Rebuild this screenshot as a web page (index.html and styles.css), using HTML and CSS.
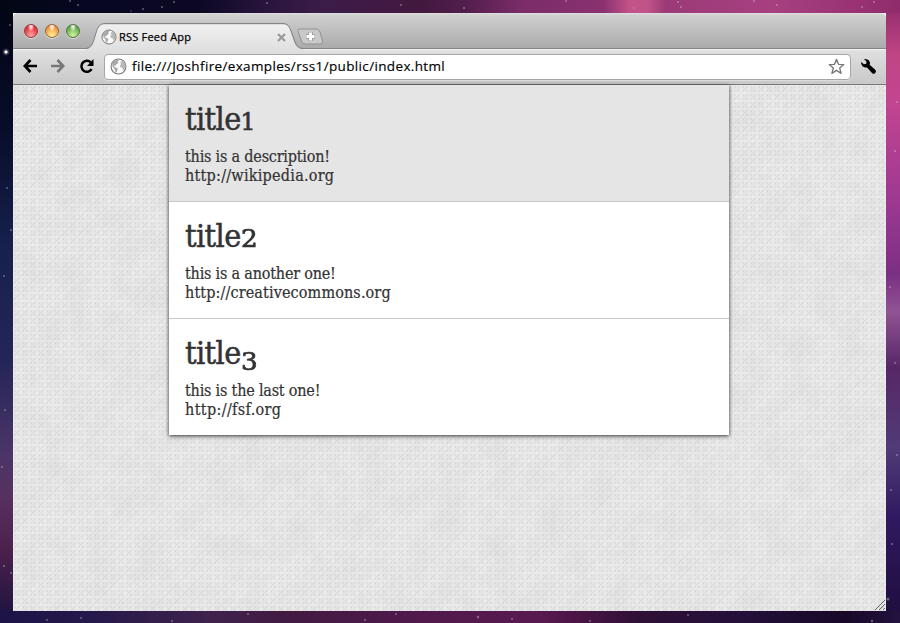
FILE: index.html
```html
<!DOCTYPE html>
<html lang="en">
<head>
<meta charset="utf-8">
<title>RSS Feed App</title>
<link rel="stylesheet" href="styles.css">
</head>
<body>
<svg class="stars" width="900" height="623" fill="#ddd">
  <defs>
    <symbol id="globe" viewBox="0 0 16 16">
      <circle cx="8" cy="8" r="7" fill="#fbfbfb" stroke="#777" stroke-width="1"/>
      <path d="M2 5 4.2 2.3 7.6 1.6 8.5 2.7 7.1 3.6 7.9 4.800 5.800 6.200 5.200 7.500 3.800 7.100 4.100 8.600 6 9 7.500 10.300 6.700 11.800 6.200 14.200 4.700 12.500 4.300 10.300 2.400 8.300Z" fill="#aaa"/>
      <path d="M10.200 3.200 12.200 3.100 14 5.300 14.600 8.200 13.400 11.200 12.100 11.700 11.800 9.500 9.800 8.800 9.300 7 10.700 5.600 9.700 4.800Z" fill="#b8b8b8"/>
    </symbol>
  </defs>
  <g opacity=".4">
    <circle cx="70" cy="1" r="1"/><circle cx="78" cy="5" r="1"/><circle cx="131" cy="11" r=".8"/><circle cx="143" cy="9" r="1"/><circle cx="162" cy="7" r="1"/><circle cx="174" cy="2" r="1"/><circle cx="267" cy="3" r="1"/><circle cx="401" cy="5" r="1"/><circle cx="464" cy="8" r="1"/><circle cx="566" cy="1" r="1"/><circle cx="634" cy="8" r=".8"/><circle cx="678" cy="2" r="1"/><circle cx="681" cy="7" r="1"/><circle cx="754" cy="1" r="1"/><circle cx="777" cy="5" r="1"/><circle cx="862" cy="7" r="1"/><circle cx="874" cy="2" r="1"/>
    <circle cx="10" cy="25" r="1"/><circle cx="7" cy="188" r="1"/><circle cx="11" cy="230" r="1"/><circle cx="4" cy="276" r="1"/><circle cx="5" cy="410" r="1"/><circle cx="2" cy="467" r="1"/><circle cx="4" cy="566" r="1"/><circle cx="11" cy="573" r="1"/>
    <circle cx="897" cy="102" r="1"/><circle cx="895" cy="151" r="1"/><circle cx="890" cy="287" r="1"/><circle cx="895" cy="363" r="1"/><circle cx="897" cy="455" r="1"/><circle cx="891" cy="490" r="1"/><circle cx="892" cy="544" r="1"/><circle cx="888" cy="599" r="1.500"/>
    <circle cx="47" cy="620" r="1"/><circle cx="81" cy="618" r="1"/><circle cx="172" cy="621" r="1"/><circle cx="248" cy="614" r="1"/><circle cx="365" cy="620" r="1"/><circle cx="396" cy="614" r="1"/><circle cx="478" cy="617" r="1.200"/><circle cx="512" cy="619" r="1"/><circle cx="590" cy="621" r="1"/><circle cx="688" cy="615" r="1"/><circle cx="872" cy="621" r="1.200"/>
  </g>
</svg>
<main class="window">
  <header class="tabs">
    <div class="lights"><i class="light red"></i><i class="light amber"></i><i class="light green"></i></div>
    <div class="tab">
      <svg class="tab-shape" width="218" height="28" viewBox="0 0 218 28">
        <defs><linearGradient id="tg" x2="0" y2="1"><stop stop-color="#f0f0f0"/><stop offset="1" stop-color="#dfdfdf"/></linearGradient></defs>
        <path d="M0 26C7 25 7 20 10 11C12 4 14 1.500 19 1.500H197C203 1.500 203 5 206 13C209 22 210 25.500 218 26V28H0Z" fill="url(#tg)"/>
        <path d="M0 25.500C7 24 7 19 10 10C12 3 14 .5 19 .5H197C203 .5 204 5 207 13C210 22 211 25.500 218 25.500" fill="none" stroke="#858585"/>
      </svg>
      <svg class="favicon" width="16" height="16"><use href="#globe"/></svg>
      <span class="tab-title">RSS Feed App</span>
      <svg class="close" width="9" height="9" viewBox="0 0 9 9"><path d="M1 1 8 8M8 1 1 8" stroke="#999" stroke-width="2.200"/></svg>
    </div>
    <svg class="newtab" width="27" height="17" viewBox="0 0 27 17">
      <path d="M2 1H19Q22 1 23 4L25.500 13Q26 16 23 16H8Q5.500 16 4.500 13L1 3Q.5 1 2 1Z" fill="#c9c9c9" stroke="#929292"/>
      <path d="M13.500 4V13M9 8.500H18" stroke="#999" stroke-width="4.500"/>
      <path d="M13.500 4.500V12.500M9.500 8.500H17.500" stroke="#fff" stroke-width="3"/>
    </svg>
  </header>
  <nav class="toolbar">
    <svg class="back" width="15" height="14" viewBox="0 0 15 14"><path d="M7.500 1 1.800 7 7.500 13M2 7H14" fill="none" stroke="#000" stroke-width="2.700"/></svg>
    <svg class="forward" width="15" height="14" viewBox="0 0 15 14"><path d="M7.500 1 13.200 7 7.500 13M1 7H13" fill="none" stroke="#777" stroke-width="2.700"/></svg>
    <svg class="reload" width="16" height="15" viewBox="0 0 16 15"><path d="M11.800 3.300A5.500 5.500 0 1 0 12.600 10.200" fill="none" stroke="#000" stroke-width="2.500"/><path d="M14.500 0V7H8Z"/></svg>
    <div class="address">
      <svg width="17" height="17"><use href="#globe"/></svg>
      <span class="url">file:///Joshfire/examples/rss1/public/index.html</span>
      <svg class="star" width="17" height="17" viewBox="0 0 17 17"><path d="M8.500 1.300 10.500 6.300 15.800 6.600 11.700 10 13.100 15.400 8.500 12.400 3.900 15.400 5.300 10 1.200 6.600 6.500 6.300Z" fill="#fff" stroke="#777" stroke-width="1.300" stroke-linejoin="round"/></svg>
    </div>
    <svg class="wrench" width="17" height="17" viewBox="0 0 17 17"><path d="M4 1Q7 .5 9 2.500Q10.500 4.500 9.600 6.700L15.500 12Q16.700 14 15 15.300Q13.500 16.500 12 14.900L7 9.400Q4.500 10 2.500 8.200Q.8 6.500 1.100 4.100L4 6.300 6.300 5.800 6.500 3.600Z"/></svg>
  </nav>
  <section class="page">
    <svg class="linen" width="873" height="526">
      <filter id="blotch" x="0" y="0" width="100%" height="100%"><feTurbulence type="fractalNoise" baseFrequency=".04" numOctaves="5" seed="4"/><feColorMatrix values="0 0 0 0 .5  0 0 0 0 .5  0 0 0 0 .5  .3 0 0 0 -.11"/></filter>
      <rect width="873" height="526" filter="url(#blotch)"/>
    </svg>
    <ul class="feed">
      <li class="item selected"><h2>title<span class="numeral">1</span></h2><p class="d1">this is a description!</p><p class="u1">http://wikipedia.org</p></li>
      <li class="item"><h2>title<span class="numeral wide">2</span></h2><p class="d2">this is a another one!</p><p class="u2">http://creativecommons.org</p></li>
      <li class="item"><h2>title<span class="numeral wide low">3</span></h2><p class="d3">this is the last one!</p><p class="u3">http://fsf.org</p></li>
    </ul>
    <svg class="grip" width="12" height="12" viewBox="0 0 12 12"><path d="M1 11 11 1M5 11 11 5M9 11 11 9" stroke="#666"/></svg>
  </section>
</main>
</body>
</html>
```
FILE: styles.css
```css
* { box-sizing: border-box; }
body {
  margin: 0; width: 900px; height: 623px; overflow: hidden; padding: 13px 14px 12px 13px;
  background:
    radial-gradient(circle at 6px 52px, #fff 0 1px, #aaa6 2px, transparent 4px) no-repeat,
    linear-gradient(90deg, #020714, #070722 10%, #0c0824 22%, #2a153e 30%, #3c1c49 36%, #43183f 47%, #531f4d 52%, #7b2c69 58%, #8a3170 67%, #c25389 70%, #c05388 72%, #9b3a77 74%, #a84080 86%, #902b6c) 0 0 / 900px 13px no-repeat,
    linear-gradient(90deg, #1d1347, #25184a 10%, #3f224d 23%, #421a42 32%, #51194c 47%, #591950 60%, #2f0f35 71%, #24103a 82%, #180827 94%, #21123f) 0 611px / 900px 12px no-repeat,
    linear-gradient(#030514, #080c28 20%, #17214d 40%, #252557 58%, #4b3568 73%, #57305f 80%, #4d214c 88%, #1a123f) 0 0 / 13px 623px no-repeat,
    linear-gradient(#8c2a68, #c04585 9%, #c34590 16%, #9e3992 32%, #7b2f83 44%, #905394 50%, #572765 59%, #503b78 72%, #2f1a61 83%, #1d0d3b) 886px 0 / 14px 623px no-repeat;
}
.stars { position: absolute; top: 0; left: 0; }
svg { display: block; flex: none; }
h2, p, ul { margin: 0; padding: 0; }
.window { position: relative; height: 598px; border-radius: 5px 5px 0 0; overflow: hidden; font-family: "Open Sans", "Noto Sans", sans-serif; color: #000; }
.tabs { height: 36px; display: flex; align-items: flex-start; background: linear-gradient(#e0e0e0 0, #d0d0d0 2px, #acacac 34px, #aaa 35px, #858585 35px); }
.lights { display: flex; gap: 7px; padding: 11px 0 0 11px; width: 73px; }
.light { width: 14px; height: 14px; border-radius: 50%; border: 1px solid; box-shadow: 0 1px 0 #ddd; flex: none; }
.red { border-color: #963b40; background: radial-gradient(ellipse at 50% 8%, #fffc 0 12%, transparent 38%), radial-gradient(circle at 50% 85%, #ffaaa5, #ed424a 55%, #b91f2b); }
.amber { border-color: #9c6537; background: radial-gradient(ellipse at 50% 8%, #fffc 0 12%, transparent 38%), radial-gradient(circle at 50% 85%, #fff29b, #f5a94b 55%, #c86526); }
.green { border-color: #4e7940; background: radial-gradient(ellipse at 50% 8%, #fffc 0 12%, transparent 38%), radial-gradient(circle at 50% 85%, #d3f5a0, #79b959 55%, #438139); }
.tab { display: grid; grid-template-columns: 15px 19px 155px 29px; width: 218px; height: 26px; margin-top: 10px; align-items: center; }
.tab-shape { grid-area: 1 / 1 / 2 / 5; align-self: start; }
.favicon { grid-area: 1 / 2; }
.tab-title { grid-area: 1 / 3; font-size: 11px; line-height: 16px; letter-spacing: .2px; margin-left: -1px; -webkit-text-stroke: .25px #000; }
.close { grid-area: 1 / 4; margin-left: 2px; }
.newtab { margin: 15px 0 0 -7px; }
.toolbar { height: 36px; display: flex; align-items: center; background: linear-gradient(#f4f4f4, #dfdfdf 2px, #c9c9c9 34px, #ccc 35px, #777 35px); padding: 0 8px 2px 10px; }
.forward { margin-left: 12px; }
.reload { margin-left: 14px; }
.address { display: flex; align-items: center; width: 747px; height: 26px; margin-left: 9px; border: 1px solid #a5a5a5; border-radius: 4px; background: #fff; padding: 0 5px; box-shadow: 0 1px #ddd; position: relative; top: .5px; }
.url { font-size: 13.5px; line-height: 18px; margin: -1px 0 0 5px; letter-spacing: .35px; white-space: nowrap; -webkit-text-stroke: .15px #000; }
.star { margin-left: auto; }
.wrench { margin-left: 9px; }
.page {
  height: 526px; position: relative; padding: 0 157px 0 156px;
  background:
    repeating-linear-gradient(135deg, #7777770c 0 1px, transparent 1px 4px),
    radial-gradient(circle at 2px 2px, #77777718 0 1px, transparent 1.500px) 0 0 / 4px 4px,
    radial-gradient(circle at 4px 4px, #77777710 0 1.500px, transparent 2.500px) 0 0 / 8px 8px,
    #ebebeb;
}
.linen { position: absolute; top: 0; left: 0; }
.feed { position: relative; list-style: none; width: 560px; height: 350px; background: #fff; box-shadow: 0 1px 4px #000c; color: #333; font-family: "DejaVu Serif Condensed", "DejaVu Serif", Georgia, serif; -webkit-text-stroke: .2px #333; }
.item { height: 117px; padding: 15px 16px 0; border-bottom: 1px solid #c8c8c8; }
.item:last-child { height: 116px; border: 0; }
.selected { background: #e5e5e5; }
.item h2 { font-size: 32px; line-height: 38px; height: 38px; font-weight: 400; letter-spacing: -.6px; margin-bottom: 9px; -webkit-text-stroke: .5px #333; }
.numeral { font-family: "DejaVu Serif", serif; font-size: 23.500px; line-height: 0; letter-spacing: 0; -webkit-text-stroke: .7px #333; }
.wide { display: inline-block; transform: scaleX(1.12); transform-origin: left; }
.low { vertical-align: -6px; }
.item p { font-size: 16px; line-height: 19px; width: max-content; }
.d1, .d2, .d3 { letter-spacing: -.2px; }
.u1 { letter-spacing: .25px; }
.u2 { letter-spacing: .13px; }
.u3 { letter-spacing: .36px; }
.grip { position: absolute; right: 0; bottom: 0; }
```
